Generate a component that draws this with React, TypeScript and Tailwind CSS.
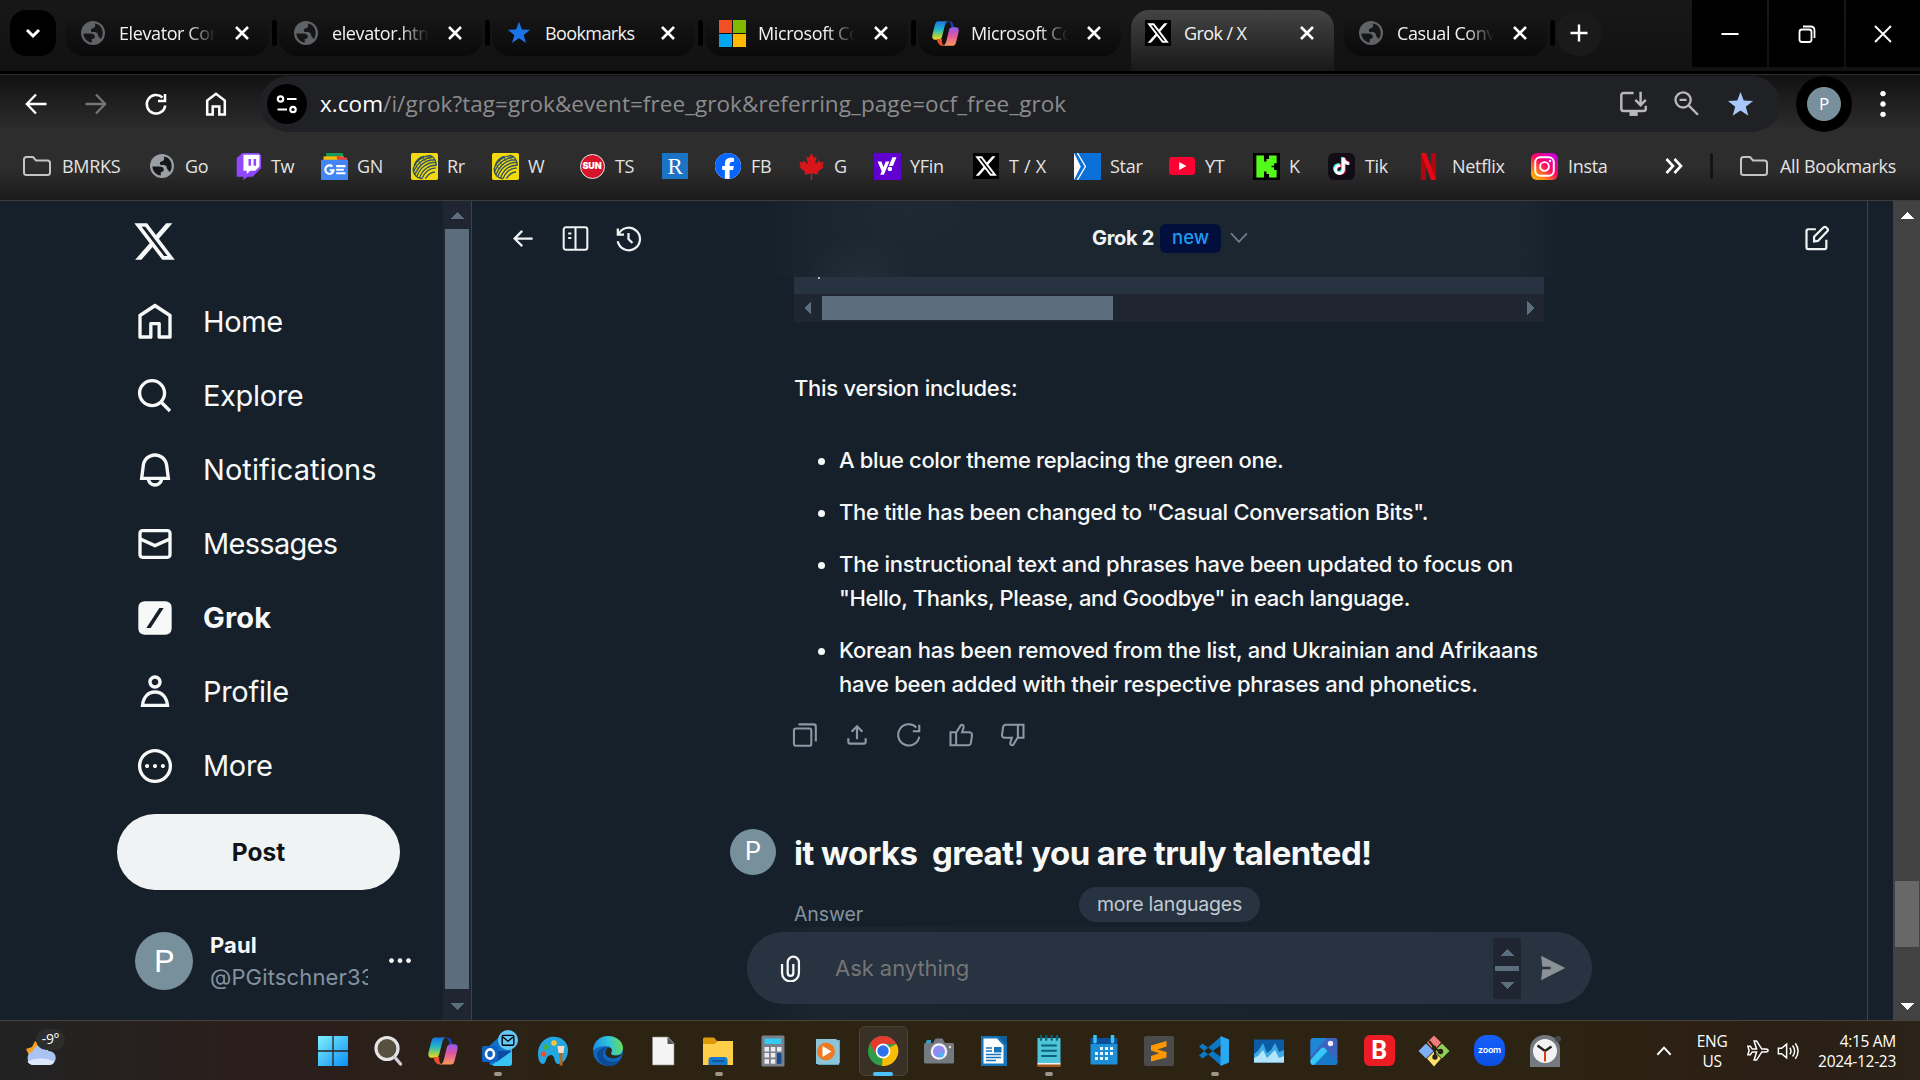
import React from "react";
import { FaFacebook, FaCanadianMapleLeaf, FaTiktok, FaYahoo } from "react-icons/fa6";

const UI = "font-['Open_Sans','Noto_Sans',sans-serif]";
const X_PATH =
  "M18.244 2.25h3.308l-7.227 8.26 8.502 11.24H16.17l-5.214-6.817L4.99 21.75H1.68l7.73-8.835L1.254 2.25H8.08l4.713 6.231zm-1.161 17.52h1.833L7.084 4.126H5.117z";

type Kids = { children?: React.ReactNode; className?: string };

const Fill = ({ d, className = "" }: { d: string; className?: string }) => (
  <svg viewBox="0 0 24 24" className={`shrink-0 ${className}`} fill="currentColor">
    <path d={d} />
  </svg>
);
const Line = ({ children, className = "", w = 2 }: Kids & { w?: number }) => (
  <svg viewBox="0 0 24 24" className={`shrink-0 ${className}`} fill="none" stroke="currentColor" strokeWidth={w}>
    {children}
  </svg>
);
const Pic = ({ children, className = "size-8" }: Kids) => (
  <svg viewBox="0 0 32 32" className={`shrink-0 ${className}`}>
    {children}
  </svg>
);

/* ---------- site icons ---------- */

const Globe = ({ className = "text-[#5f6368]" }: { className?: string }) => (
  <svg viewBox="0 0 24 24" className={`size-6 shrink-0 ${className}`}>
    <circle cx="12" cy="12" r="12" fill="currentColor" />
    <path d="M2.400 12.600H9c3 0 4.800 1 4.800 3.200 0 1.600-1.200 2.200-3 2.200v3.600C6 21 2.600 17.500 2.400 12.600z" fill="#161616" />
    <path d="M13.500 2.400C19 3 21.700 7.500 21.700 12c0 2.500-.8 4.700-2.200 6.300-.2-1.800-1.700-2-2.300-3.300-.5-1.400-.2-3-1.800-3.600-1.700-.6-4.600.3-5.400-1.200-.7-1.500.4-2.700 1.900-3 1.900-.4 3.300-2.600 1.600-4.800z" fill="#161616" />
  </svg>
);
const Star = ({ className }: { className: string }) => (
  <Fill className={className} d="M12 .8l2.900 7.700 8.300.3-6.500 5.100 2.300 8-7-4.600-7 4.600 2.300-8L.8 8.800l8.300-.3z" />
);
const MsLogo = () => (
  <svg viewBox="0 0 27 27" className="size-[27px]">
    <path fill="#f25022" d="M0 0h13v13H0z" />
    <path fill="#7fba00" d="M14 0h13v13H14z" />
    <path fill="#00a4ef" d="M0 14h13v13H0z" />
    <path fill="#ffb900" d="M14 14h13v13H14z" />
  </svg>
);
const Copilot = ({ className = "size-8", id }: { className?: string; id: string }) => (
  <Pic className={className}>
    <defs>
      <linearGradient id={id + "a"} x1="0" y1="0" x2="0" y2="1">
        <stop offset="0" stopColor="#1b74e0" />
        <stop offset=".45" stopColor="#21b6c8" />
        <stop offset=".75" stopColor="#8fd05a" />
        <stop offset="1" stopColor="#f8d31f" />
      </linearGradient>
      <linearGradient id={id + "b"} x1="0" y1="0" x2="0" y2="1">
        <stop offset="0" stopColor="#8f5cf0" />
        <stop offset=".45" stopColor="#e0569f" />
        <stop offset="1" stopColor="#fb9a5a" />
      </linearGradient>
    </defs>
    <path d="M20 2.500h-2c2 0 3 1.200 3.600 3.300L22.800 10h3c-1-3.500-1.300-7.500-5.800-7.500z" fill="#1541b8" />
    <path d="M8 2.500h11.500c-3 .5-3.700 3-4.500 5.700L12.300 19c-.8 2.700-1.600 3.800-4.300 3.800H4.500C1 22.800 1 19.500 1.800 16.500L4.200 7C5 4 5.700 2.500 8 2.500z" fill={`url(#${id}a)`} />
    <path d="M6.200 22h6c-.3 2.700 0 5.700 2.300 7.500H13c-4.500 0-5.700-4-6.800-7.500z" fill="#e8502c" />
    <path d="M24 29.500H12.800c3-.5 3.600-3 4.300-5.700L19.700 13c.7-2.700 1.600-3.800 4.300-3.800h3.500c3.500 0 3.500 3.300 2.700 6.300L27.800 25c-.8 3-1.500 4.500-3.800 4.500z" fill={`url(#${id}b)`} />
  </Pic>
);
const XTile = () => (
  <span className="flex size-[26px] shrink-0 items-center justify-center bg-black text-white">
    <Fill d={X_PATH} className="size-6" />
  </span>
);
const Folder = () => (
  <Line className="h-6 w-7 text-[#c4c4c4]" w={2}>
    <path d="M-1 5.500q0-2.500 2.500-2.500H8l3 3.500h11.500q2.500 0 2.500 2.500v9.500q0 2.500-2.500 2.500h-21q-2.500 0-2.500-2.500z" />
  </Line>
);
const Yarn = () => (
  <Pic className="size-[27px]">
    <rect width="32" height="32" rx="2" fill="#f5d90f" />
    <g stroke="#2f5460" strokeWidth="1.600" fill="none">
      <path d="M2.500 19C5 10 13 4 22 3M3 23C6 13 15 6 25 5M4.500 26C9 15 17 8 28 8M7 28C10 18 19 11 29 11M10 30C13 20 21 14 30 14.500M13 30.500C16 23 22 17 29.500 18M17 30.500c3-5 7-8 11.500-8M4 14c2-5 6-9 11-10M22 3c5 1 8 6 8 12M2.500 19c0 6 4 11 10 11.500" />
      <path d="M13 4.500l4 5M8 8l4 6M5 13l3 6M18 3.500l5 4" strokeWidth="1" />
    </g>
  </Pic>
);

/* ---------- browser chrome ---------- */

const CloseX = () => (
  <Line className="size-6 text-white" w={2.600}>
    <path d="M6 6l12 12M18 6L6 18" />
  </Line>
);

const Tab = ({ icon, title, active }: { icon: React.ReactNode; title: string; active?: boolean }) => (
  <div
    className={`flex h-[46px] w-[203px] shrink-0 items-center rounded-[18px] pl-[13px] ${
      active ? "mt-[10px] h-[61px]! rounded-b-none bg-linear-to-b from-[#444] to-[#191919] pb-[15px]" : "mt-[10px] bg-linear-to-b from-[#181818] to-[#0a0a0a]"
    }`}
  >
    <span className="flex w-7 shrink-0 justify-center">{icon}</span>
    <span
      className={`ml-3 w-[97px] overflow-hidden text-[18px] leading-6 whitespace-nowrap text-[#f2f2f2] ${
        title === "Bookmarks" || active ? "tracking-[-0.6px]" : "tracking-[-0.4px] mask-r-from-70% mask-r-to-100%"
      }`}
    >
      {title}
    </span>
    <span className="ml-[14px]">
      <CloseX />
    </span>
  </div>
);
const Sep = () => <div className="mx-[2.500px] mt-5 h-[26px] w-[5px] shrink-0 rounded-full bg-black" />;

const TabStrip = () => (
  <div className="flex h-[71px] items-start bg-linear-to-b from-[#181818] to-[#111]">
    <div className="mt-[10px] ml-[10px] flex h-[46px] w-[46px] shrink-0 items-center justify-center rounded-[16px] bg-black">
      <Line className="size-6 text-white" w={3}>
        <path d="M6 9l6 6 6-6" />
      </Line>
    </div>
    <div className="ml-[10px] flex shrink-0 items-start">
      <Tab icon={<Globe />} title="Elevator Contro" />
      <Sep />
      <Tab icon={<Globe />} title="elevator.html" />
      <Sep />
      <Tab icon={<Star className="size-6 text-[#1a73e8]" />} title="Bookmarks" />
      <Sep />
      <Tab icon={<MsLogo />} title="Microsoft Copilot" />
      <Sep />
      <Tab icon={<Copilot id="t" className="size-[29px]" />} title="Microsoft Copilot" />
      <div className="w-[10px]" />
      <Tab icon={<XTile />} title="Grok / X" active />
      <div className="w-[10px]" />
      <Tab icon={<Globe />} title="Casual Convers" />
      <Sep />
    </div>
    <div className="mt-[10px] -ml-px flex size-[46px] shrink-0 items-center justify-center rounded-full bg-[#1a1a1a]">
      <Line className="size-6 text-white" w={2.400}>
        <path d="M12 3.500v17M3.500 12h17" />
      </Line>
    </div>
    <div className="ml-auto flex h-[67px] shrink-0 gap-[2px] text-white">
      <div className="flex w-[75px] items-center justify-center bg-black">
        <Line className="size-6" w={2}>
          <path d="M3.500 12h17" />
        </Line>
      </div>
      <div className="flex w-[75px] items-center justify-center bg-black">
        <Line className="size-6" w={1.800}>
          <rect x="4.500" y="7.500" width="12" height="12.500" rx="2.500" />
          <path d="M8 4.500h7.500q4 0 4 4V16" />
        </Line>
      </div>
      <div className="flex w-[74px] items-center justify-center bg-black">
        <Line className="size-6" w={1.900}>
          <path d="M4 4l16 16M20 4L4 20" />
        </Line>
      </div>
    </div>
  </div>
);

const Toolbar = () => (
  <div className="flex h-[56px] items-center text-white">
    <div className="flex w-[260px] shrink-0 items-center gap-9 pl-6">
      <Line className="size-6" w={2.300}>
        <path d="M22.500 12H3M12 2.500L2.800 12l9.200 9.500" />
      </Line>
      <Line className="size-6 text-[#757575]" w={2.300}>
        <path d="M1.500 12H21M12 2.500l9.200 9.500-9.200 9.500" />
      </Line>
      <Line className="size-6" w={2.500}>
        <path d="M21.300 13.500a9.300 9.300 0 1 1-2.800-8M21 2v7h-7" />
      </Line>
      <Line className="size-6" w={2.500}>
        <path d="M3.200 8.500L12 1.800l8.800 6.700v14h-5.500v-8H8.700v8H3.200z" />
      </Line>
    </div>
    <div className="flex h-[56px] w-[1520px] shrink-0 items-center rounded-full bg-[#202124] pl-[7px]">
      <div className="flex size-10 items-center justify-center rounded-full bg-black">
        <Line className="size-6" w={2.200}>
          <circle cx="5.500" cy="7" r="2.700" />
          <path d="M12 7h9.500M2.500 17.500h9.500" />
          <circle cx="18" cy="17.500" r="2.700" />
        </Line>
      </div>
      <div className="ml-[13px] text-[22.500px] leading-7 tracking-[0.05px] whitespace-nowrap text-[#8b8c8e]">
        <span className="text-white">x.com</span>/i/grok?tag=grok&amp;event=free_grok&amp;referring_page=ocf_free_grok
      </div>
      <div className="mr-[26px] ml-auto flex items-center text-[#b9b9b9]">
        <Line className="size-7" w={2.100}>
          <path d="M12.500 2.500H4Q2 2.500 2 4.500V16q0 2 2 2h17q2 0 2-2v-2.500" />
          <path d="M9 20.500h7" strokeWidth="3.500" />
          <path d="M18.500 1.500v11M14 8.500l4.500 4.500L23 8.500" />
        </Line>
        <Line className="mr-[27px] ml-[25px] size-7" w={2}>
          <circle cx="9.500" cy="8.500" r="6.500" />
          <path d="M6.500 8.500h6M14.200 13.200l8 8" />
        </Line>
        <Star className="size-[27px] text-[#a8c7fa]" />
      </div>
    </div>
    <div className="ml-4 flex size-14 shrink-0 items-center justify-center rounded-full bg-black">
      <div className="flex size-[34px] items-center justify-center rounded-full bg-[#78909c] text-[17px]">P</div>
    </div>
    <Fill className="ml-[19px] size-6 scale-125" d="M12 1.500a2.200 2.200 0 1 0 .01 0zM12 9.800a2.200 2.200 0 1 0 .01 0zM12 18.100a2.200 2.200 0 1 0 .01 0z" />
  </div>
);

const bookmarks: { w: string; icon: React.ReactNode; label: string }[] = [
  { w: "w-[125px] gap-[11px]", icon: <Folder />, label: "BMRKS" },
  { w: "w-[86px] gap-[9px]", icon: <Globe className="text-[#9aa0a6]" />, label: "Go" },
  {
    w: "w-[86px] gap-[9px]",
    icon: (
      <Pic className="size-[27px]">
        <path d="M9 0h19l3 3v15L21 28h-6l-5 4v-4H2V6z" fill="#9146ff" />
        <path d="M11 2h18v14l-5 5h-6l-4 4v-4h-4V2z" fill="#fff" />
        <path d="M16 7h3v8h-3zM22 7h3v8h-3z" fill="#9146ff" />
      </Pic>
    ),
    label: "Tw",
  },
  {
    w: "w-[90px] gap-[9px]",
    icon: (
      <Pic className="size-[27px]">
        <path d="M6 0h20v8H6z" fill="#0f9d58" />
        <path d="M3 4l24 0v6H3z" fill="#fbbc04" />
        <path d="M18 3l13 3v4H20z" fill="#ea4335" />
        <rect y="8" width="32" height="24" rx="1" fill="#4285f4" />
        <path d="M13.500 16a5 5 0 1 0 1.500 4.500h-4.500M18 15.500h11M18 19.800h9M18 24h11" stroke="#fff" strokeWidth="2.500" fill="none" />
      </Pic>
    ),
    label: "GN",
  },
  { w: "w-[81px] gap-[9px]", icon: <Yarn />, label: "Rr" },
  { w: "w-[87px] gap-[9px]", icon: <Yarn />, label: "W" },
  {
    w: "w-[83px] gap-[9px]",
    icon: (
      <span className="flex size-[25px] items-center justify-center rounded-full border-[1.500px] border-[#e6e6e6] bg-[#d7152a] font-['Inter'] text-[9px] font-black tracking-[-0.2px] text-white">SUN</span>
    ),
    label: "TS",
  },
  {
    w: "w-[53px]",
    icon: <span className="flex size-[26px] items-center justify-center bg-[#1a73c4] font-['Liberation_Serif'] text-[23px] leading-none text-white">R</span>,
    label: "",
  },
  {
    w: "w-[83px] gap-[9px]",
    icon: (
      <span className="rounded-full bg-white">
        <FaFacebook className="size-[26px] text-[#0866ff]" />
      </span>
    ),
    label: "FB",
  },
  { w: "w-[76px] gap-[9px]", icon: <FaCanadianMapleLeaf className="size-[27px] text-[#d9151b]" />, label: "G" },
  {
    w: "w-[99px] gap-[9px]",
    icon: (
      <span className="flex size-[27px] items-center justify-center bg-[#6001d2] text-white">
        <FaYahoo className="size-5" />
      </span>
    ),
    label: "YFin",
  },
  { w: "w-[101px] gap-[9px] [word-spacing:1px]", icon: <XTile />, label: "T / X" },
  {
    w: "w-[95px] gap-[9px]",
    icon: (
      <Pic className="size-[27px]">
        <path d="M0 0h32v32H0z" fill="#0b6fd8" />
        <path d="M0 0l8 16L0 32z" fill="#fff" />
        <path d="M4 0l9.500 16L4 32" fill="none" stroke="#fff" strokeWidth="1.600" />
      </Pic>
    ),
    label: "Star",
  },
  {
    w: "w-[84px] gap-[9px]",
    icon: (
      <Pic className="size-[26px]">
        <rect y="5" width="32" height="22" rx="4" fill="#ff0033" />
        <path d="M12.500 11v10l9-5z" fill="#fff" />
      </Pic>
    ),
    label: "YT",
  },
  {
    w: "w-[75px] gap-[9px]",
    icon: (
      <Pic className="size-[27px]">
        <path d="M0 0h32v32H0z" fill="#000" />
        <path d="M4 3h9v7h3V7h3V3h9v9h-3v3h-3v2h3v3h3v9h-9v-4h-3v-3h-3v7H4z" fill="#53fc18" />
      </Pic>
    ),
    label: "K",
  },
  {
    w: "w-[87px] gap-[10px]",
    icon: (
      <span className="flex size-[27px] items-center justify-center rounded-md bg-[#120c14] text-white">
        <FaTiktok className="size-[17px] [filter:drop-shadow(-1px_-0.5px_0_#25f4ee)_drop-shadow(1px_0.5px_0_#fe2c55)]" />
      </span>
    ),
    label: "Tik",
  },
  {
    w: "w-[116px] gap-[10px]",
    icon: (
      <Pic className="size-[27px]">
        <path d="M7 0h6v32H7zM19 0h6v32h-6z" fill="#b1060f" />
        <path d="M7 0h6l12 32h-6z" fill="#e50914" />
      </Pic>
    ),
    label: "Netflix",
  },
  {
    w: "w-[120px] gap-[10px]",
    icon: (
      <Pic className="size-[27px]">
        <defs>
          <linearGradient id="ig" x1="0" y1="1" x2=".8" y2="0">
            <stop offset="0" stopColor="#ffc800" />
            <stop offset=".3" stopColor="#ff7a1a" />
            <stop offset=".6" stopColor="#ff0169" />
            <stop offset="1" stopColor="#c800d8" />
          </linearGradient>
        </defs>
        <rect width="32" height="32" rx="7" fill="url(#ig)" />
        <rect x="5" y="5" width="22" height="22" rx="6" fill="none" stroke="#fff" strokeWidth="2.300" />
        <circle cx="16" cy="16" r="5.200" fill="none" stroke="#fff" strokeWidth="2.300" />
        <circle cx="22.500" cy="9.500" r="1.500" fill="#fff" />
      </Pic>
    ),
    label: "Insta",
  },
];

const Bookmarks = () => (
  <div className="flex h-[68px] items-center pl-[23px] text-[18px] leading-6 tracking-[-0.3px] text-[#e3e3e3]">
    {bookmarks.map((b, i) => (
      <div key={i} className={`flex shrink-0 items-center ${b.w}`}>
        <span className="flex w-7 shrink-0 justify-center">{b.icon}</span>
        <span className="whitespace-nowrap">{b.label}</span>
      </div>
    ))}
    <Line className="ml-[12px] size-6 text-white" w={2.600}>
      <path d="M4.500 5l6.500 7-6.500 7M12.500 5l6.500 7-6.500 7" />
    </Line>
    <div className="ml-[24px] h-[26px] w-[3px] shrink-0 rounded-full bg-[#141414]" />
    <div className="ml-[27px] flex shrink-0 items-center gap-[12px] whitespace-nowrap">
      <Folder />
      All Bookmarks
    </div>
  </div>
);

/* ---------- left navigation ---------- */

const nav = [
  { label: "Home", t: "tracking-[-0.35px]", d: "M21.591 7.146L12.52 1.157c-.316-.21-.724-.21-1.04 0l-9.071 5.99c-.26.173-.409.456-.409.757v13.183c0 .502.418.913.929.913h6.638c.511 0 .929-.41.929-.913v-7.075h3.008v7.075c0 .502.418.913.929.913h6.639c.51 0 .928-.41.928-.913V7.904c0-.301-.158-.584-.408-.758zM20 20l-4.500.01.011-7.097c0-.502-.418-.913-.928-.913H9.440c-.511 0-.929.41-.929.913L8.500 20H4V8.773l8.011-5.342L20 8.764z" },
  { label: "Explore", t: "tracking-[-0.35px]", d: "M10.250 3.750c-3.590 0-6.500 2.910-6.500 6.500s2.910 6.500 6.500 6.500c1.795 0 3.419-.726 4.596-1.904 1.178-1.177 1.904-2.801 1.904-4.596 0-3.590-2.910-6.500-6.500-6.500zm-8.500 6.500c0-4.694 3.806-8.500 8.500-8.500s8.500 3.806 8.500 8.500c0 1.986-.682 3.815-1.824 5.262l4.781 4.781-1.414 1.414-4.781-4.781c-1.447 1.142-3.276 1.824-5.262 1.824-4.694 0-8.500-3.806-8.500-8.500z" },
  { label: "Notifications", t: "tracking-[0.05px]", d: "M19.993 9.042C19.480 5.017 16.054 2 11.996 2s-7.490 3.021-7.999 7.051L2.866 18H7.100c.463 2.282 2.481 4 4.900 4s4.437-1.718 4.900-4h4.236l-1.143-8.958zM12 20c-1.306 0-2.417-.835-2.829-2h5.658c-.412 1.165-1.523 2-2.829 2zm-6.866-4l.847-6.698C6.364 6.272 8.941 4 11.996 4s5.627 2.268 6.013 5.295L18.864 16H5.134z" },
  { label: "Messages", t: "tracking-[-0.7px]", d: "M1.998 5.500c0-1.381 1.119-2.500 2.500-2.500h15c1.381 0 2.500 1.119 2.500 2.500v13c0 1.381-1.119 2.500-2.500 2.500h-15c-1.381 0-2.500-1.119-2.500-2.500v-13zm2.500-.5c-.276 0-.5.224-.5.5v2.764l8 3.638 8-3.636V5.500c0-.276-.224-.5-.5-.5h-15zm15.500 5.463l-8 3.636-8-3.638V18.500c0 .276.224.5.5.5h15c.276 0 .5-.224.5-.5v-8.037z" },
  { label: "Grok", t: "font-bold tracking-[0.2px]", d: "M6 2h12q4 0 4 4v12q0 4-4 4H6q-4 0-4-4V6q0-4 4-4zM14.600 6L6.800 18h2.600L17.200 6z" },
  { label: "Profile", t: "tracking-[-0.3px]", d: "M5.651 19h12.698c-.337-1.800-1.023-3.210-1.945-4.190C15.318 13.650 13.838 13 12 13s-3.317.65-4.404 1.810c-.922.98-1.608 2.390-1.945 4.190zm.486-5.560C7.627 11.850 9.648 11 12 11s4.373.85 5.863 2.440c1.477 1.580 2.366 3.800 2.632 6.460l.11 1.100H3.395l.11-1.100c.266-2.660 1.155-4.880 2.632-6.460zM12 4c-1.105 0-2 .9-2 2s.895 2 2 2 2-.9 2-2-.895-2-2-2zM8 6c0-2.210 1.791-4 4-4s4 1.790 4 4-1.791 4-4 4-4-1.790-4-4z" },
  { label: "More", t: "tracking-[-0.35px]", d: "M3.750 12c0-4.560 3.690-8.250 8.250-8.250s8.250 3.690 8.250 8.250-3.690 8.250-8.250 8.250S3.750 16.560 3.750 12zM12 1.750C6.340 1.750 1.750 6.340 1.750 12S6.340 22.250 12 22.250 22.250 17.660 22.250 12 17.660 1.750 12 1.750zm-4.750 11.500c.69 0 1.250-.56 1.250-1.250s-.56-1.250-1.250-1.250S6 11.310 6 12s.56 1.250 1.250 1.250zm9.500 0c.69 0 1.250-.56 1.250-1.250s-.56-1.250-1.250-1.250-1.250.56-1.250 1.250.56 1.250 1.250 1.250zM13.250 12c0 .69-.56 1.250-1.250 1.250s-1.250-.56-1.250-1.250.56-1.250 1.250-1.250 1.250.56 1.250 1.250z" },
];

const Sidebar = () => (
  <div className="flex w-[443px] shrink-0 flex-col pt-[18px] text-[#f7f9f9]">
    <Fill d={X_PATH} className="ml-[132px] size-[45px]" />
    <nav className="mt-[21px] flex flex-col">
      {nav.map((n) => (
        <div key={n.label} className="flex h-[74px] items-center gap-[28px] pl-[135px]">
          <Fill d={n.d} className="size-10" />
          <span className={`text-[29px] leading-9 ${n.t}`}>{n.label}</span>
        </div>
      ))}
    </nav>
    <div className="mt-[11px] ml-[117px] flex h-[76px] w-[283px] items-center justify-center rounded-full bg-[#eff3f4] pt-px text-[24.500px] font-bold text-[#0f1419]">Post</div>
    <div className="mt-[42px] ml-[135px] flex h-[58px] items-center">
      <div className="flex size-[58px] items-center justify-center rounded-full bg-[#78909c] font-['Roboto'] text-[32px] text-white">P</div>
      <div className="ml-[17px] w-[158px] overflow-hidden text-[22px] leading-8 whitespace-nowrap">
        <div className="font-bold tracking-[0.1px]">Paul</div>
        <div className="tracking-[0.15px] text-[#8493a0]">@PGitschner333</div>
      </div>
      <Fill className="ml-[20px] size-6" d="M3.500 9.200a2.400 2.400 0 1 0 .01 0zM12 9.200a2.400 2.400 0 1 0 .01 0zM20.500 9.200a2.400 2.400 0 1 0 .01 0z" />
    </div>
  </div>
);

const Tri = ({ d, className }: { d: string; className: string }) => (
  <svg viewBox="0 0 14 14" className={`size-[14px] shrink-0 ${className}`} fill="currentColor" shapeRendering="crispEdges">
    <path d={d} />
  </svg>
);
const UP = "M0 11L7 4l7 7z";
const DOWN = "M0 4l7 7 7-7z";

/* ---------- conversation ---------- */

const Header = () => (
  <div className="flex h-[76px] items-center bg-[radial-gradient(55px_45px_at_390px_76px,#232d37_0%,transparent_100%),radial-gradient(90px_55px_at_435px_10px,#1f2934_0%,transparent_100%),linear-gradient(90deg,transparent_295px,#1a2530_345px,#1b2630_500px,#1b2630_1050px,transparent_1090px)] pb-[2px] text-[#eff3f4]">
    <div className="flex w-[620px] items-center gap-[26px] pl-[37px]">
      <Fill className="size-[27px]" d="M7.414 13l5.043 5.040-1.414 1.420L3.586 12l7.457-7.460 1.414 1.420L7.414 11H21v2H7.414z" />
      <Line className="size-[27px]" w={1.800}>
        <rect x="1.500" y="2" width="21" height="20" rx="2" />
        <path d="M12 2v20M5.500 7.500h2.800M5.500 11.500h2.800" />
      </Line>
      <Line className="size-[27px]" w={2}>
        <path d="M2.500 3v5.500H8M3 8.500a10 10 0 1 1-.6 6M12 7v5.500l3.500 3.500" />
      </Line>
    </div>
    <span className="text-[20px] font-bold tracking-[-0.3px] whitespace-nowrap">Grok 2</span>
    <span className="ml-[6px] flex h-[29px] w-[61px] items-center justify-center rounded-md bg-[#020f3c] text-[18.500px] font-medium text-[#1d9bf0]">new</span>
    <Line className="ml-[8px] size-5 text-[#71808d]" w={2}>
      <path d="M2.500 6.500l9.500 10 9.500-10" />
    </Line>
    <Line className="mr-[36px] ml-auto size-7" w={1.900}>
      <path d="M11 4.500H4.500Q3 4.500 3 6v14q0 1.500 1.500 1.500h14q1.500 0 1.500-1.500v-6.500" />
      <path d="M9.500 15v-4L17.500 3q1.200-1.200 2.500 0l.8.8q1.200 1.200 0 2.500l-8 8.200z" />
    </Line>
  </div>
);

const Item = ({ lines }: { lines: [string, string][] }) => (
  <li className="flex">
    <span className="mt-[15px] mr-[14px] size-[7px] shrink-0 rounded-full bg-[#f7f9f9]" />
    <span>
      {lines.map(([t, c]) => (
        <span key={t} className={`block whitespace-nowrap ${c}`}>
          {t}
        </span>
      ))}
    </span>
  </li>
);

const Actions = () => (
  <div className="mt-[21px] ml-[320px] flex h-[26px] items-center gap-[26px] text-[#8b98a5]">
    <Line className="size-[26px]" w={1.900}>
      <rect x="1.800" y="6" width="16" height="16" rx="1.800" />
      <path d="M6 2.200h14q2 0 2 2V18" />
    </Line>
    <Fill className="size-[26px]" d="M12 2.590l5.700 5.700-1.410 1.420L13 6.410V16h-2V6.410l-3.300 3.300-1.410-1.420L12 2.590zM21 15l-.02 3.510c0 1.380-1.120 2.490-2.500 2.490H5.500C4.110 21 3 19.880 3 18.500V15h2v3.500c0 .28.22.5.5.5h12.980c.28 0 .5-.22.5-.5L19 15h2z" />
    <Line className="size-[26px]" w={1.900}>
      <path d="M21.500 13.500A9.800 9.800 0 1 1 18.800 5M21.500 2.500v6h-6" />
    </Line>
    <Line className="size-[26px]" w={1.900}>
      <path d="M2.300 9.500h5.200v12H2.300zM7.500 10l4.300-7q1-1 2.200 0 .8 1 .3 2.500L13 9.500h6.500q3 0 2.600 3l-1 7q-.5 2-2.500 2H7.500" />
    </Line>
    <Line className="size-[26px]" w={1.900}>
      <path d="M21.700 14.500h-5.200v-12h5.200zM16.500 14l-4.300 7q-1 1-2.200 0-.8-1-.3-2.500l1.300-4H4.500q-3 0-2.600-3l1-7q.5-2 2.500-2h11.100" />
    </Line>
  </div>
);

const Conversation = () => (
  <main className="flex w-[1396px] shrink-0 flex-col border-r border-[#38444d]">
    <Header />
    <div className="ml-[322px] h-[17px] w-[750px] bg-[#273340] pl-6">
      <div className="h-[2px] w-[2px] bg-[#aab3bb]" />
    </div>
    <div className="ml-[322px] flex h-[28px] w-[750px] items-center bg-[#1f2631] text-[#5c6e7e]">
      <Tri className="mr-[7px] ml-[7px]" d="M10 0L3 7l7 7z" />
      <div className="h-6 w-[291px] bg-[#5c6e7e]" />
      <Tri className="mr-[7px] ml-auto" d="M4 0l7 7-7 7z" />
    </div>
    <div className="ml-[322px] text-[22px] leading-[34px] font-medium text-[#f7f9f9]">
      <p className="mt-[49px] tracking-[-0.28px] whitespace-nowrap">This version includes:</p>
      <ul className="mt-[38px] ml-6 flex flex-col gap-[18px]">
        <Item lines={[["A blue color theme replacing the green one.", "tracking-[-0.36px]"]]} />
        <Item lines={[['The title has been changed to "Casual Conversation Bits".', "tracking-[-0.3px]"]]} />
        <Item
          lines={[
            ["The instructional text and phrases have been updated to focus on", "tracking-[-0.23px]"],
            ['"Hello, Thanks, Please, and Goodbye" in each language.', "tracking-[-0.38px]"],
          ]}
        />
        <Item
          lines={[
            ["Korean has been removed from the list, and Ukrainian and Afrikaans", "tracking-[-0.23px]"],
            ["have been added with their respective phrases and phonetics.", "tracking-[-0.24px]"],
          ]}
        />
      </ul>
    </div>
    <Actions />
    <div className="mt-[81px] ml-[258px] flex h-[46px] items-center">
      <div className="flex size-[46px] items-center justify-center rounded-full bg-[#78909c] font-['Roboto'] text-[25px] text-white">P</div>
      <h1 className="ml-[18px] pt-px text-[33px] leading-10 font-bold tracking-[-0.6px] whitespace-pre text-[#f7f9f9]">it works  great! you are truly talented!</h1>
    </div>
    <div className="mt-3 ml-[322px] flex h-[35px]">
      <span className="w-[285px] pt-[13px] text-[19.500px] leading-7 tracking-[-0.1px] text-[#8493a0]">Answer</span>
      <span className="flex w-[181px] items-center justify-center rounded-full bg-[#273340] text-[19.500px] tracking-[-0.2px] text-[#c0c9d0]">more languages</span>
    </div>
    <div className="mt-[5px] h-[93px] bg-[linear-gradient(90deg,transparent_290px,#1a2530_345px,#17222d_900px,transparent_1080px)] pt-[5px]">
      <div className="ml-[275px] flex h-[72px] w-[845px] items-center rounded-full bg-[#273340]">
        <Line className="ml-[30px] size-[27px] text-[#f7f9f9]" w={2}>
          <path d="M4.500 8v8a7.500 7.500 0 0 0 15 0V6.500a5 5 0 0 0-10 0V16a2.500 2.500 0 0 0 5 0V8" />
        </Line>
        <span className="ml-[31px] pt-px text-[22px] tracking-[-0.05px] text-[#757575]">Ask anything</span>
        <div className="ml-auto flex h-[61px] w-7 flex-col items-center justify-between bg-[#1f2631] py-[7px] text-[#5c6e7e]">
          <Tri d={UP} className="" />
          <div className="h-[5px] w-6 bg-[#5c6e7e]" />
          <Tri d={DOWN} className="" />
        </div>
        <Fill className="mr-[25px] ml-[18px] size-7 text-[#8a9297]" d="M1.800 1.500L22.500 12 1.800 22.500 2.800 13H10v-2H2.800z" />
      </div>
    </div>
  </main>
);

/* ---------- taskbar ---------- */

const tasks: { icon: React.ReactNode; dot?: boolean; active?: boolean }[] = [
  {
    icon: (
      <Pic className="size-[30px]">
        <defs>
          <linearGradient id="win" x1="0" y1="0" x2="1" y2="1">
            <stop offset="0" stopColor="#7ff0ff" />
            <stop offset="1" stopColor="#0a8ef5" />
          </linearGradient>
        </defs>
        <path d="M0 0h15.300v15.300H0zM16.700 0H32v15.300H16.700zM0 16.700h15.300V32H0zM16.700 16.700H32V32H16.700z" fill="url(#win)" />
      </Pic>
    ),
  },
  {
    icon: (
      <Pic>
        <circle cx="15" cy="13.500" r="11" fill="#57503f" stroke="#e4e4e6" strokeWidth="3.200" />
        <path d="M22.500 22l6 7" stroke="#cfcfd4" strokeWidth="3.400" strokeLinecap="round" />
      </Pic>
    ),
  },
  { icon: <Copilot id="k" /> },
  {
    dot: true,
    icon: (
      <span className="relative">
        <Pic>
          <path d="M4 14L17 2l13 10v18H8z" fill="#1173c7" />
          <path d="M10 30L30 14v14q0 3-3 3H12z" fill="#38c5f5" />
          <path d="M16 16h14L16 26z" fill="#0a4da2" />
          <rect x="0" y="11" width="16" height="16" rx="1.500" fill="#0f62c4" />
          <ellipse cx="8" cy="19" rx="4" ry="4.600" fill="none" stroke="#fff" strokeWidth="2.600" />
        </Pic>
        <span className="absolute -top-[5px] left-4 flex size-5 items-center justify-center rounded-full bg-[#62c8f8] text-black">
          <Line className="size-[14px]" w={2.300}>
            <rect x="2" y="4" width="20" height="17" rx="2" />
            <path d="M3 7l9 7 9-7" />
          </Line>
        </span>
      </span>
    ),
  },
  {
    icon: (
      <Pic>
        <path d="M19 2C9 0 1 9 1 18c0 7 2 11 5 11 4 0 2-9 8-9 5 0 2 9.500 8 9 6-1 9-8 9-14S27 3 19 2z" fill="#22a7e3" />
        <circle cx="9" cy="12" r="2.800" fill="#3fb24a" />
        <circle cx="17" cy="8" r="2.800" fill="#f7c52e" />
        <circle cx="6.500" cy="19" r="2.800" fill="#e4532b" />
        <path d="M20.500 11h7l-1 7h-5z" fill="#f6dcc0" />
        <path d="M22.300 18h3.200v12.500h-2.800z" fill="#b46a1c" />
      </Pic>
    ),
  },
  {
    icon: (
      <Pic>
        <defs>
          <linearGradient id="edge" x1="0" y1=".3" x2="1" y2=".2">
            <stop offset="0" stopColor="#1a8fe0" />
            <stop offset=".5" stopColor="#2fc3df" />
            <stop offset="1" stopColor="#6be04a" />
          </linearGradient>
        </defs>
        <circle cx="16" cy="16" r="15" fill="#0f66bd" />
        <path d="M1 16C1 6 9 1 16 1c9 0 15 6 15 12 0 5-4 7.500-8 7.500-3 0-5-1.500-3.500-3.500C21 14 18.500 11 14 11 8 11 2 14 1 16z" fill="url(#edge)" />
        <path d="M11 20c0-5 3-8 6-8-6 0-12 3-12 9 1 6 7 10 13 10 4 0 8-2 10-6-8 4-17 1-17-5z" fill="#0d4a94" />
        <path d="M19.500 17c1-2 0-4-2.500-4.500-2.500.5-4 3-3.500 6 1 4 6 5.500 10.500 4.500 3-.7 5-2 6-4-5 3-13 1.500-10.500-2z" fill="#2d2716" />
      </Pic>
    ),
  },
  {
    icon: (
      <Pic>
        <path d="M5.500 2H21l6 6.500V30H5.500z" fill="#f4f4f4" stroke="#8a8a8a" strokeWidth=".6" />
        <path d="M20.500 2L27 9h-6.500z" fill="#555" />
      </Pic>
    ),
  },
  {
    dot: true,
    icon: (
      <Pic>
        <path d="M1 4q0-1.500 1.500-1.500H12L15 6v6H1z" fill="#dd9a08" />
        <path d="M1 9h12l2.500-3H31v24H1z" fill="#ffcf4a" />
        <path d="M6.500 30v-5q0-3 3-3h13q3 0 3 3v5z" fill="#1579c9" />
        <path d="M10 26h12" stroke="#0b4a86" strokeWidth="1.300" />
      </Pic>
    ),
  },
  {
    icon: (
      <Pic>
        <rect x="4.500" y="0.500" width="23" height="31" rx="1.500" fill="#7a808a" />
        <path d="M7.500 3.500h17V9h-17z" fill="#35cbf0" />
        <path d="M7.500 12h4.500v4.500H7.500zM13.800 12h4.500v4.500h-4.500zM20 12h4.500v4.500H20zM7.500 18h4.500v4.500H7.500zM13.800 18h4.500v4.500h-4.500zM7.500 24.300h4.500v4.500H7.500zM13.800 24.300h4.500v4.500h-4.500z" fill="#e9ebee" />
        <path d="M20 18h4.500v10.800H20z" fill="#134b95" />
      </Pic>
    ),
  },
  {
    icon: (
      <Pic>
        <path d="M6 5h22v23l-4 2H6z" fill="#5fa8c8" />
        <path d="M4 4h20l3 3v23l-4-1H4z" fill="#8cc4dc" />
        <circle cx="14" cy="16.500" r="9" fill="#f07a22" />
        <path d="M10.500 11v11l9-5.500z" fill="#fff" />
      </Pic>
    ),
  },
  {
    active: true,
    icon: (
      <Pic>
        <circle cx="16" cy="16" r="15" fill="#2f9e4a" />
        <path d="M16 16L29.500 9A15 15 0 0 1 15 31z" fill="#fbbc05" />
        <path d="M3 8.500A15 15 0 0 1 29.300 9H16l-7 11z" fill="#e33b2e" />
        <circle cx="16" cy="16" r="7.400" fill="#fff" />
        <circle cx="16" cy="16" r="5.700" fill="#2a73e8" />
      </Pic>
    ),
  },
  {
    icon: (
      <Pic>
        <path d="M3 7q0-2 2-2h3v4H3z" fill="#2aa4d8" />
        <path d="M2.500 8H10l2.500-4.500h7L22 8h7.500Q31 8 31 9.500V27q0 1.500-1.500 1.500h-27Q1 28.500 1 27V9.500Q1 8 2.500 8z" fill="#757a80" />
        <circle cx="16" cy="16.500" r="8.300" fill="#f3f3f6" />
        <circle cx="16" cy="16.500" r="6" fill="#8d8cf0" />
        <circle cx="18" cy="20" r="2.500" fill="#46b3f2" />
        <circle cx="27" cy="12" r="1.200" fill="#ddd" />
      </Pic>
    ),
  },
  {
    icon: (
      <Pic>
        <path d="M3 1h18l8 9v21H3z" fill="#1674b8" />
        <path d="M5.500 3.500H19l6.500 7v18h-20z" fill="#fff" />
        <path d="M20 1h9v9z" fill="#0f5c99" />
        <path d="M8 13h6M8 16h6M8 19.500h15M8 22.500h15M8 25.500h10" stroke="#1674b8" strokeWidth="1.500" />
        <path d="M16 12h7.500v5.500H16z" fill="#1674b8" />
      </Pic>
    ),
  },
  {
    dot: true,
    icon: (
      <Pic>
        <path d="M4.500 27h23v3.500h-23z" fill="#f2f2f2" />
        <path d="M4.500 29.500h23V32h-23z" fill="#a3521a" />
        <path d="M4.500 3h23v25h-23z" fill="#4fc3d9" />
        <path d="M9 10.500h14M9 15.800h14M9 21h14" stroke="#0b6377" strokeWidth="2" strokeLinecap="round" />
        <path d="M8 .8v4M13.300.8v4M18.700.8v4M24 .8v4" stroke="#0b6377" strokeWidth="2.200" strokeLinecap="round" />
      </Pic>
    ),
  },
  {
    icon: (
      <Pic>
        <path d="M2.500 3h27v6h-27z" fill="#0b4f9c" />
        <path d="M2.500 9h27v19q0 1.500-1.500 1.500H4q-1.500 0-1.500-1.500z" fill="#1c8fd8" />
        <path d="M7 .8v6M24.500.8v6" stroke="#37c8f5" strokeWidth="3.500" strokeLinecap="round" />
        <path d="M12 12h3v3h-3zM17 12h3v3h-3zM22 12h3v3h-3zM7 17h3v3H7zM12 17h3v3h-3zM17 17h3v3h-3zM22 17h3v3h-3zM7 22h3v3H7zM12 22h3v3h-3zM17 22h3v3h-3z" fill="#eaf6fd" />
      </Pic>
    ),
  },
  {
    icon: (
      <Pic>
        <rect x="1" y="1" width="30" height="30" rx="2" fill="#4b4b4b" />
        <path d="M8 10.500L23.500 6v5.500l-9 3 9 2.500v5.500L8 26.500V21l8.500-2.700L8 15.500z" fill="#ff9800" />
      </Pic>
    ),
  },
  {
    dot: true,
    icon: (
      <Pic>
        <path d="M1 11.500L4.500 8.500 23 22v8.500zM1 20.500l3.500 3L23 10V1.500z" fill="#0b78c6" />
        <path d="M22.500 1L31 4.500v23L22.500 31z" fill="#2ba8f2" />
      </Pic>
    ),
  },
  {
    icon: (
      <Pic>
        <path d="M1 4.500h30v23H1z" fill="#0c5ba6" />
        <path d="M1 19l4-3 5-8 4 10 4-3 4-7 4 9 5-2v12.500H1z" fill="#39a9e4" />
        <path d="M1 23l4-2 5-6 4 8 4-4 4-4 4 8 5-2v6.500H1z" fill="#b4e4fa" />
      </Pic>
    ),
  },
  {
    icon: (
      <Pic>
        <rect x="2.500" y="3" width="27" height="27" rx="3" fill="#3d63c0" />
        <path d="M2.500 6q0-3 3-3h13L2.500 22z" fill="#1f86d6" />
        <path d="M2.500 25L13 13.500q2-2 4 0l12.500 12.500v1q0 3-3 3h-21q-3 0-3-3z" fill="#1778c8" />
        <path d="M2.500 25L13 13.500q2-2 4 0l2.500 2.500L6 30q-3.500 0-3.500-3z" fill="#38c8f6" />
        <circle cx="22.500" cy="8.500" r="2.700" fill="#f0ecf8" />
      </Pic>
    ),
  },
  {
    icon: <span className="flex size-[31px] items-center justify-center rounded-md bg-[#ed1c24] font-['Roboto'] text-[25px] leading-none font-bold text-white">B</span>,
  },
  {
    icon: (
      <Pic>
        <path d="M16 .5l7 7-7 8-7-8z" fill="#f27c79" />
        <path d="M8 8.500l7.500 7.500L8 23.500.5 16z" fill="#7db0f8" />
        <path d="M24 8.500l7.500 7.500-7.500 7.500L16.500 16z" fill="#8ed058" />
        <path d="M16 16.500l7 7-7 8-7-8z" fill="#fbe073" />
        <path d="M11 6l6 7v10M17 13l5 4" stroke="#2b2213" strokeWidth="2" fill="none" />
        <circle cx="17" cy="22" r="2.700" fill="#2b2213" />
        <circle cx="22.500" cy="16.500" r="2.700" fill="#2b2213" />
        <circle cx="16" cy="13" r="2.400" fill="#2b2213" />
      </Pic>
    ),
  },
  {
    icon: <span className="flex size-[31px] items-center justify-center rounded-[13px] bg-linear-to-b from-[#1560ff] to-[#0b4fe0] pb-[2px] font-['Inter'] text-[9px] font-semibold tracking-[-0.3px] text-white">zoom</span>,
  },
  {
    icon: (
      <Pic>
        <path d="M1 32V14A15 14 0 0 1 31 14v18z" fill="#737a81" />
        <circle cx="29" cy="4" r="3" fill="#45484b" />
        <circle cx="16" cy="16" r="12" fill="#f2f2f2" />
        <path d="M8.500 10.500L16 16l6.500-4.500" stroke="#222" strokeWidth="2.400" fill="none" />
        <path d="M16 16v10.500" stroke="#d8400f" strokeWidth="2" />
      </Pic>
    ),
  },
];

const Taskbar = () => (
  <div className="flex h-[60px] items-center border-t border-[#4a4438] bg-[linear-gradient(90deg,#222223_0%,#2a1f1c_12%,#2b1f1b_18%,#2c2313_30%,#2c2313_82%,#2d1f14_88%,#291f15_94%,#2b2218_100%)] text-white">
    <div className="relative ml-[25px] h-9 w-[280px]">
      <Pic className="mt-[4px] size-8">
        <path d="M1 12l6-2 3-6 8 6-8 12-5-2z" fill="#f5a021" />
        <path d="M8 28a7 7 0 0 1-.5-13.500 8.500 8.500 0 0 1 16-.5A7 7 0 0 1 24 28z" fill="#a9c3f2" />
        <path d="M8 28a7 7 0 0 1-5.500-3.500Q15 18 29.500 24.500 28 28 24 28z" fill="#dce7fb" />
      </Pic>
      <span className="absolute -top-[4px] left-[11px] flex h-[21px] w-[29px] items-center justify-center rounded-full bg-[#2d2d2d] text-[14px] leading-none tracking-[-0.3px]">-9°</span>
    </div>
    {tasks.map((t, i) => (
      <div key={i} className="relative flex h-[50px] w-[55.1px] shrink-0 items-center justify-center">
        {t.active && <span className="absolute inset-x-[3px] inset-y-0 rounded-md border border-[#4a4236] bg-[#393125]" />}
        <span className="relative">{t.icon}</span>
        {t.dot && <span className="absolute bottom-0 left-6 h-1 w-2 rounded-full bg-[#9b978f]" />}
        {t.active && <span className="absolute bottom-0 left-[17px] h-1 w-5 rounded-full bg-[#4cc2ff]" />}
      </div>
    ))}
    <div className="ml-auto flex items-center pr-6 text-[15.500px] leading-5 tracking-[-0.3px]">
      <Line className="size-5" w={2.200}>
        <path d="M4 16.500l8-8.500 8 8.500" />
      </Line>
      <div className="ml-[21px] w-[34px] text-center">
        ENG
        <br />
        US
      </div>
      <Line className="ml-[17px] size-[23px]" w={1.600}>
        <path d="M2 7.500h2.500l2 3H11L8.500 2H11l5.500 8.500h4q2.500 0 2.500 1.500t-2.500 1.500h-4L11 22H8.500l2.500-8.500H6.500l-2 3H2L3.200 12z" />
      </Line>
      <Line className="ml-[8px] size-[22px]" w={1.600}>
        <path d="M1.500 9H5l5.500-4.500v15L5 15H1.500zM14 8.500q2.500 3.500 0 7M17 6q4.500 6 0 12M20 3.500q6 8.500 0 17" />
      </Line>
      <div className="ml-[19px] text-right whitespace-nowrap">
        4:15 AM
        <br />
        2024-12-23
      </div>
    </div>
  </div>
);

export default function App() {
  return (
    <div className={`flex h-[1080px] w-[1920px] flex-col overflow-hidden bg-[#15202b] ${UI}`}>
      <TabStrip />
      <div className="border-t-[3px] border-t-black bg-[linear-gradient(180deg,#111_0%,#2d2d2d_45%,#2d2d2d_75%,#1a1a1a_100%)]">
        <div className="h-[2px] border-t border-[#2e2e2e]" />
        <Toolbar />
        <Bookmarks />
      </div>
      <div className="h-px bg-[#3c3c3c]" />
      <div className="flex h-[819px] bg-[#16202a] font-['Inter',sans-serif]">
        <Sidebar />
        <div className="flex w-[29px] shrink-0 flex-col items-center border-r border-[#38444d] bg-[#1f2631] text-[#5c6e7e]">
          <Tri d={UP} className="mt-[7px] mb-[7px]" />
          <div className="h-[760px] w-6 bg-[#5c6e7e]" />
          <Tri d={DOWN} className="mt-[10px]" />
        </div>
        <Conversation />
        <div className="ml-auto flex w-[27px] shrink-0 flex-col items-center bg-[#424242] text-white">
          <Tri d={UP} className="mt-[7px]" />
          <div className="mt-[659px] h-[66px] w-6 bg-[#686868]" />
          <Tri d={DOWN} className="mt-[52px]" />
        </div>
      </div>
      <Taskbar />
    </div>
  );
}
